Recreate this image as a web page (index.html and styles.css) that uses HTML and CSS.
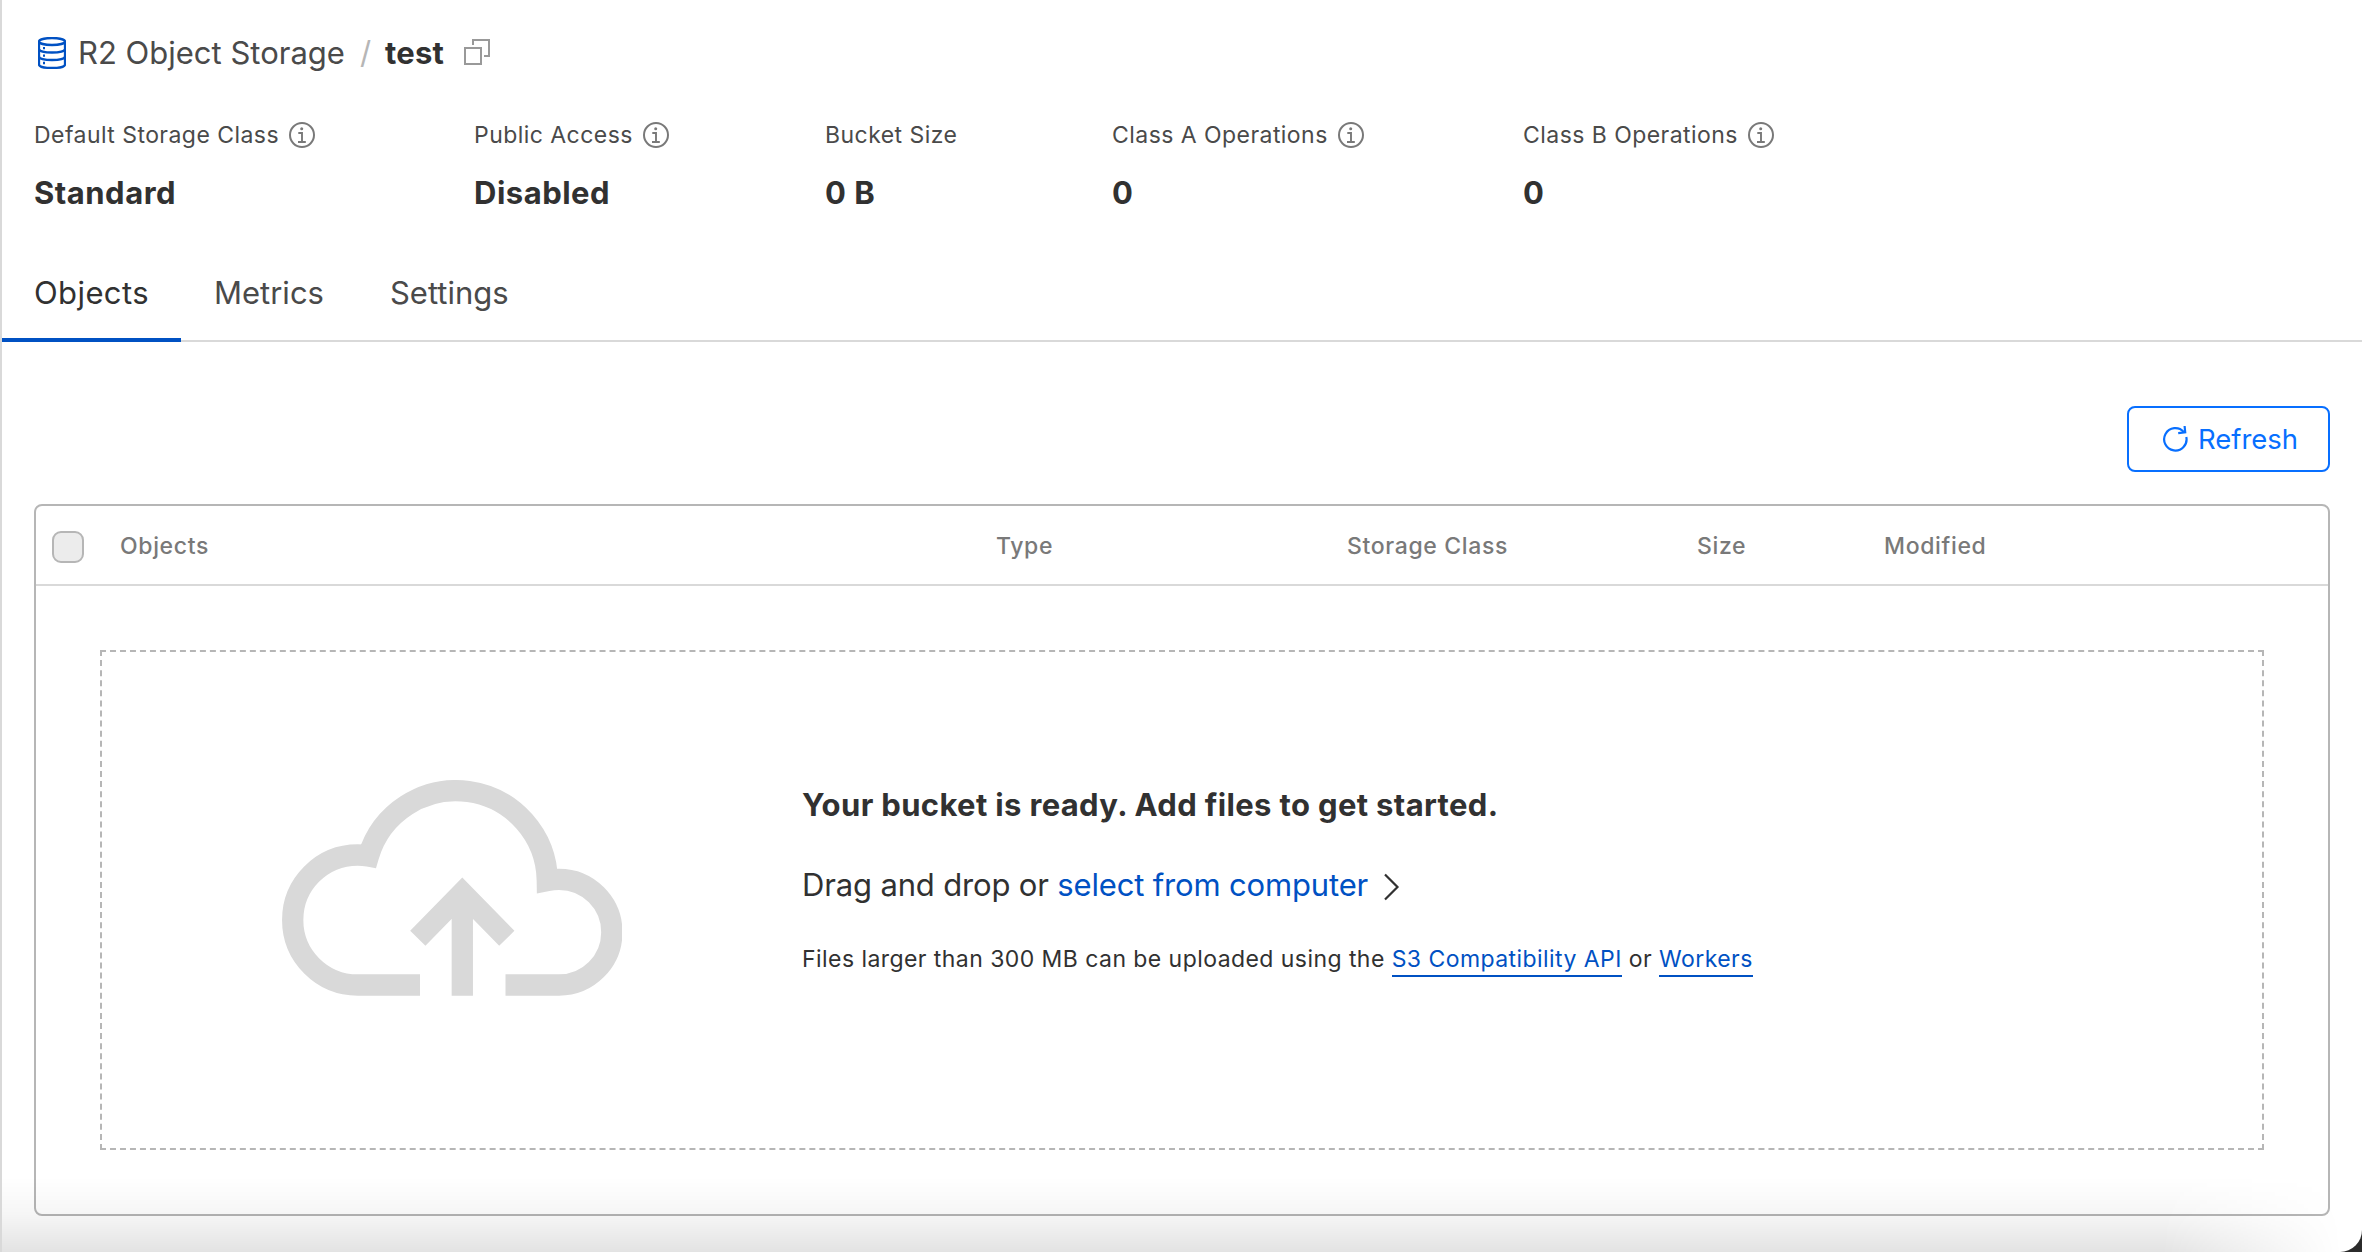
FILE: index.html
```html
<!DOCTYPE html>
<html lang="en">
<head>
    <meta charset="UTF-8">
    <meta name="viewport" content="width=device-width, initial-scale=1.0">
    <title>test | R2 Object Storage</title>
    <link rel="stylesheet" href="styles.css">
</head>
<body>
    <svg width="0" height="0" class="defs">
        <symbol id="info" viewBox="0 0 26 26">
            <circle cx="13" cy="13" r="12" fill="none" stroke="currentColor" stroke-width="2"/>
            <path d="M9.3 11H13v9M9 20h7.8" fill="none" stroke="currentColor" stroke-width="1.9"/>
            <circle cx="12.7" cy="6.8" r="1.5" fill="currentColor"/>
        </symbol>
    </svg>

    <div class="page">
        <!-- Breadcrumb -->
        <div class="breadcrumb">
            <svg class="db-icon" width="28" height="32" viewBox="0 0 28 32" fill="none" stroke="#0051c3" stroke-width="2.3">
                <ellipse cx="14" cy="4.5" rx="13" ry="3.5"/>
                <path d="M1 4.5v23c0 2 5.8 3.5 13 3.5s13-1.5 13-3.5v-23"/>
                <path d="M1 12c0 2 5.8 3.5 13 3.5s13-1.5 13-3.5M1 19.5c0 2 5.8 3.5 13 3.5s13-1.5 13-3.5"/>
                <path d="M5 11.2h2M5 18.7h2M5 26h2"/>
            </svg>
            <a href="#" class="crumb">R2 Object Storage</a>
            <span class="slash">/</span>
            <h1 class="bucket-name">test</h1>
            <svg class="copy-icon" width="26" height="26" viewBox="0 0 26 26" fill="none" stroke="#999" stroke-width="2">
                <path d="M1 9h16v16H1z"/>
                <path d="M9 6V1h16v16h-5"/>
            </svg>
        </div>

        <!-- Bucket stats -->
        <div class="stats">
            <div class="stat stat-class">
                <div class="stat-label">Default Storage Class <svg class="info"><use href="#info"/></svg></div>
                <div class="stat-value">Standard</div>
            </div>
            <div class="stat stat-access">
                <div class="stat-label">Public Access <svg class="info"><use href="#info"/></svg></div>
                <div class="stat-value">Disabled</div>
            </div>
            <div class="stat stat-size">
                <div class="stat-label">Bucket Size</div>
                <div class="stat-value">0 B</div>
            </div>
            <div class="stat stat-ops">
                <div class="stat-label">Class A Operations <svg class="info"><use href="#info"/></svg></div>
                <div class="stat-value">0</div>
            </div>
            <div class="stat">
                <div class="stat-label">Class B Operations <svg class="info"><use href="#info"/></svg></div>
                <div class="stat-value">0</div>
            </div>
        </div>

        <!-- Tabs -->
        <div class="tabs">
            <a href="#" class="tab active">Objects</a>
            <a href="#" class="tab">Metrics</a>
            <a href="#" class="tab">Settings</a>
        </div>

        <div class="content">
            <div class="toolbar">
                <button class="btn">
                    <svg width="26" height="28" viewBox="0 0 26 28" fill="none" stroke="currentColor" stroke-width="2.2">
                        <path d="M24.3 12A11.2 11.2 0 1 1 21.8 7"/>
                        <path d="M22.6 1l.6 6.4l-7 .8"/>
                    </svg>
                    Refresh
                </button>
            </div>

            <!-- Objects table -->
            <div class="table">
                <div class="table-head">
                    <div class="col-check"><span class="checkbox"></span></div>
                    <div class="col-objects">Objects</div>
                    <div class="col-type">Type</div>
                    <div class="col-class">Storage Class</div>
                    <div class="col-size">Size</div>
                    <div class="col-modified">Modified</div>
                </div>
                <div class="dropzone">
                    <svg class="cloud" width="340" height="216" viewBox="0 0 340 216" fill="none" stroke="#d9d9d9" stroke-width="21.3" stroke-miterlimit="10">
                        <path d="M138 205H75.7A65 65 0 0 1 75.7 75Q81 75 86.5 76A91.3 91.3 0 0 1 265.3 100.5Q271 99.3 277 99.3A52.8 52.8 0 0 1 277 205H223.5"/>
                        <path d="M180.3 215.7V115M135.8 158.3l44.5-45.5l44.5 45.5"/>
                    </svg>
                    <div class="dropzone-text">
                        <h2>Your bucket is ready. Add files to get started.</h2>
                        <p class="drag">Drag and drop or <a href="#">select from computer</a>
                            <svg class="chevron" width="17" height="28" viewBox="0 0 17 28" fill="none" stroke="#313131" stroke-width="2.2"><path d="M2 1.5L14.5 14L2 26.5"/></svg>
                        </p>
                        <p class="note">Files larger than 300 MB can be uploaded using the <a href="#">S3 Compatibility API</a> or <a href="#">Workers</a></p>
                    </div>
                </div>
            </div>
        </div>
        <div class="bottom-fade"></div>
    </div>
</body>
</html>
```

FILE: styles.css
```css
* {
    box-sizing: border-box;
}

body {
    font-family: Inter, "Liberation Sans", sans-serif;
    background-color: #2b2b2b;
    color: #313131;
    margin: 0;
    padding: 0;
}

a {
    color: #0051c3;
    text-decoration: none;
}

.defs {
    display: block;
}

.page {
    position: relative;
    height: 1252px;
    background-color: #fff;
    border-left: 2px solid #d9d9d9;
    border-bottom-right-radius: 22px;
    overflow: hidden;
}

/* Breadcrumb */
.breadcrumb {
    display: flex;
    align-items: center;
    height: 40px;
    margin: 32px 0 0 36px;
    font-size: 31px;
    white-space: nowrap;
}

.db-icon {
    margin-top: 2px;
}

.crumb {
    width: 267px;
    margin-left: 12px;
    color: #4a4a4a;
}

.slash {
    width: 25px;
    margin-left: 15px;
    color: #b6b6b6;
}

.bucket-name {
    width: 61px;
    margin: 0;
    font-size: 31px;
    font-weight: 700;
    letter-spacing: 0.2px;
}

.copy-icon {
    margin-left: 18px;
}

/* Stats */
.stats {
    display: flex;
    margin: 45px 0 0 32px;
}

.stat-class {
    width: 440px;
}

.stat-access {
    width: 351px;
}

.stat-size {
    width: 287px;
}

.stat-ops {
    width: 411px;
}

.stat-label {
    display: flex;
    align-items: center;
    gap: 10px;
    height: 36px;
    font-size: 23px;
    color: #4a4a4a;
    letter-spacing: 0.45px;
}

.info {
    width: 26px;
    height: 26px;
    color: #797979;
}

.stat-value {
    margin-top: 19px;
    font-size: 31px;
    line-height: 42px;
    font-weight: 700;
    letter-spacing: 0.5px;
}

/* Tabs */
.tabs {
    display: flex;
    height: 93px;
    margin-top: 35px;
    border-bottom: 2px solid #d9d9d9;
    padding-top: 23px;
}

.tab {
    height: 70px;
    padding: 0 33px;
    font-size: 31px;
    line-height: 42px;
    color: #4a4a4a;
}

.tab.active {
    width: 179px;
    padding: 0 0 0 32px;
    border-bottom: 4px solid #0051c3;
    color: #313131;
    letter-spacing: 0.4px;
}

/* Content */
.content {
    padding: 64px 32px 0 32px;
}

.toolbar {
    display: flex;
    justify-content: flex-end;
    margin-bottom: 32px;
}

.btn {
    display: flex;
    align-items: center;
    justify-content: center;
    gap: 10px;
    width: 203px;
    height: 66px;
    padding: 0 0 0 3px;
    background: #fff;
    border: 2px solid #086fff;
    border-radius: 8px;
    color: #086fff;
    font-family: inherit;
    font-size: 27.5px;
}

.table {
    height: 712px;
    border: 2px solid #b6b6b6;
    border-radius: 8px;
}

.table-head {
    display: flex;
    align-items: center;
    height: 80px;
    border-bottom: 2px solid #d9d9d9;
    padding-top: 2px;
    color: #797979;
    font-size: 23px;
    font-weight: 500;
    letter-spacing: 0.65px;
}

.col-check {
    width: 84px;
    padding-left: 16px;
}

.checkbox {
    display: block;
    width: 32px;
    height: 32px;
    margin-top: 1px;
    background-color: #ececec;
    border: 2px solid #b6b6b6;
    border-radius: 9px;
}

.col-objects {
    width: 876px;
}

.col-type {
    width: 351px;
}

.col-class {
    width: 350px;
}

.col-size {
    width: 187px;
}

/* Upload area */
.dropzone {
    display: flex;
    align-items: flex-start;
    height: 500px;
    margin: 64px;
    border: 2px dashed #b6b6b6;
}

.cloud {
    margin: 128px 0 0 180px;
}

.dropzone-text {
    margin: 132px 0 0 180px;
}

.dropzone-text h2 {
    margin: 0;
    font-size: 31px;
    line-height: 42px;
    font-weight: 700;
    letter-spacing: 0.35px;
}

.drag {
    margin: 38px 0 0;
    height: 42px;
    font-size: 31px;
    line-height: 42px;
    letter-spacing: -0.16px;
}

.chevron {
    margin-left: 6px;
    vertical-align: -5px;
}

.note {
    margin: 37px 0 0;
    font-size: 23px;
    line-height: 32px;
    letter-spacing: 0.44px;
}

.note a {
    border-bottom: 2px solid #0051c3;
    padding-bottom: 2px;
}

/* Grey haze along the bottom edge, gone before the right corner */
.bottom-fade {
    position: absolute;
    left: -2px;
    right: 0;
    bottom: 0;
    height: 75px;
    background: linear-gradient(rgba(0, 0, 0, 0), rgba(0, 0, 0, 0.035) 50%, rgba(0, 0, 0, 0.11));
    -webkit-mask-image: linear-gradient(to right, #000 calc(100% - 200px), transparent calc(100% - 20px));
    mask-image: linear-gradient(to right, #000 calc(100% - 200px), transparent calc(100% - 20px));
}
```
